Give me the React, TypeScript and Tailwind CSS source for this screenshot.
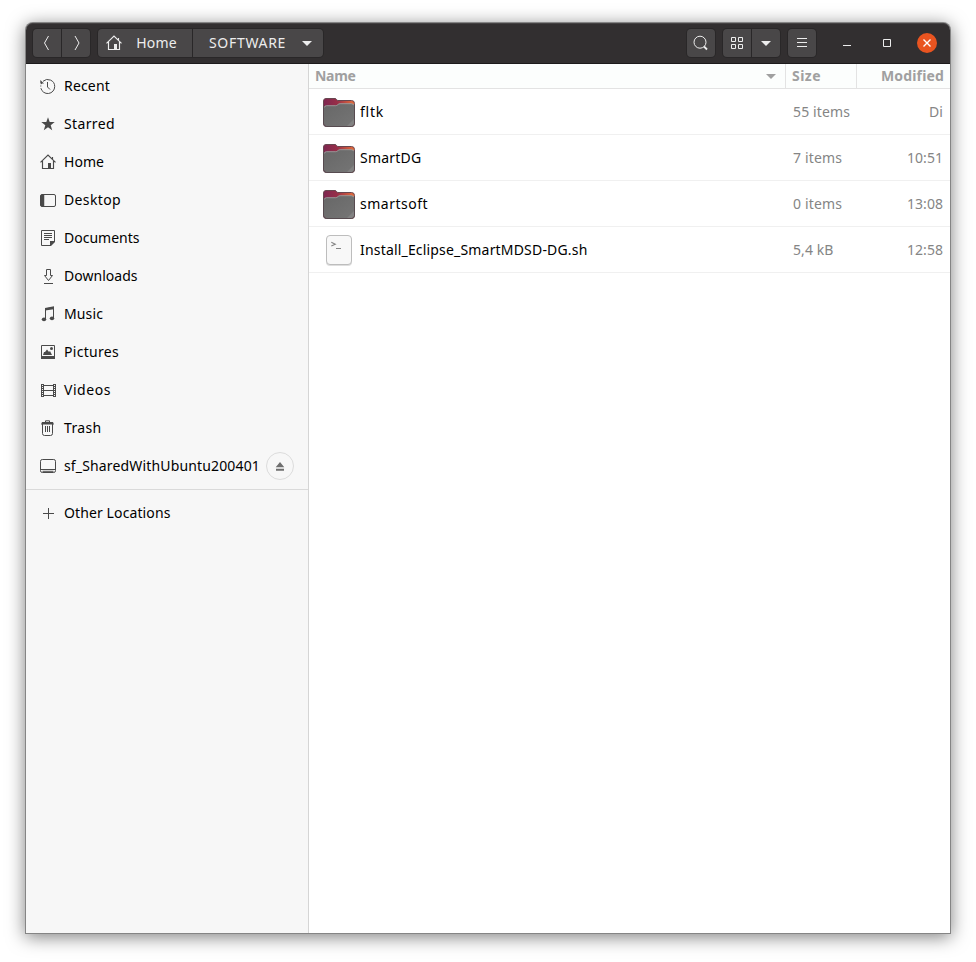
import React, { useLayoutEffect, useRef } from "react";

/** Text run whose tracking is adjusted so that it fills the given width. */
function Label({ text, width, className = "" }: { text: string; width: number; className?: string }) {
  const ref = useRef<HTMLSpanElement>(null);
  useLayoutEffect(() => {
    const el = ref.current;
    if (!el) return;
    el.style.letterSpacing = "0px";
    const natural = el.getBoundingClientRect().width;
    el.style.letterSpacing = `${(width - natural) / text.length}px`;
  }, [text, width]);
  return (
    <span ref={ref} className={`shrink-0 whitespace-pre ${className}`}>
      {text}
    </span>
  );
}

function Svg({ children, size = 16, className = "" }: { children: React.ReactNode; size?: number; className?: string }) {
  return (
    <svg width={size} height={size} viewBox={`0 0 ${size} ${size}`} fill="none" stroke="currentColor" className={`shrink-0 ${className}`}>
      {children}
    </svg>
  );
}

const HomeShape = () => (
  <>
    <path d="M.5 8.3 8 1l7.5 7.3M2.5 7v7.5h11V7M12.5 5V3" strokeWidth="1.15" />
    <path d="M8 9h3v6H8z" fill="currentColor" stroke="none" />
  </>
);

const places = [
  { name: "Recent", width: 46, icon: <><path d="M3 3.300A7 7 0 0 1 14.700 8.500a7 7 0 0 1-13.800 1.700" /><path d="M.8 8.500v-1M1.200 6.200l.5-1.100" /><path d="M.3 2v3.500H4z" fill="currentColor" stroke="none" /><path d="M7.500 4v5l2.500 2.500" /></> },
  { name: "Starred", width: 51, icon: <path d="m8 1.300 1.700 4.700h5l-4 3.200 1.500 5-4.200-3-4.200 3 1.500-5-4-3.200h5z" fill="currentColor" stroke="none" /> },
  { name: "Home", width: 40, icon: <HomeShape /> },
  { name: "Desktop", width: 57, icon: <><rect x=".5" y="2.500" width="15" height="12" rx="1.500" /><path d="M1 3h3v11H1z" fill="currentColor" strokeWidth=".5" /></> },
  { name: "Documents", width: 75.5, icon: <><path d="M10.500 15.500h-9V.5h13v11" /><path d="M4 3.500h8M4 5.500h8M4 7.500h8M4 9.500h5" /><path d="M10 11h5v1l-4 4h-1z" fill="currentColor" stroke="none" /></> },
  { name: "Downloads", width: 73.5, icon: <path d="M6.500 1.500h4v6h2l-4 5-4-5h2zM4 15.500h9" /> },
  { name: "Music", width: 39, icon: <><path d="M5.500 13V2.800l8-1.300V12" /><path d="M5 2 14 .3v3L5 4.500z" fill="currentColor" stroke="none" /><ellipse cx="4" cy="13.300" rx="2.200" ry="1.900" fill="currentColor" stroke="none" /><ellipse cx="12" cy="12.300" rx="2.200" ry="1.900" fill="currentColor" stroke="none" /></> },
  { name: "Pictures", width: 55, icon: <><path d="M1.500 1.500h13v13h-13z" /><path d="M1 12h14v3H1zM3 11l1-3h1l2-2.500L9 8l1-1 2 4z" fill="currentColor" stroke="none" /><circle cx="11.500" cy="4.500" r="1.500" fill="currentColor" stroke="none" /></> },
  { name: "Videos", width: 47, icon: <><path d="M3.500 2v13M13.500 2v13M3.500 3.500h10M3.500 8.500h10M3.500 13.500h10" /><path d="M1.500 2v13M15.500 2v13" /><path d="M2.500 2v13M14.500 2v13" strokeDasharray="1 1" /></> },
  { name: "Trash", width: 37.5, icon: <><path d="M5.500 2V.8h4V2M2.500 4v9.500q0 2 2 2h6q2 0 2-2V4M5.500 6v6M7.500 6v6M9.500 6v6" /><path d="M2 2h11l1 2.500H1z" fill="currentColor" stroke="none" /></> },
  { name: "sf_SharedWithUbuntu200401", width: 196, icon: <><rect x=".5" y="1.500" width="15" height="13" rx="1.800" /><path d="M1 11.500h14M2.500 13.300h11" /></> },
];

const rows = [
  { name: "fltk", width: 24, size: "55 items", sw: 57, modified: "Di", mw: 14 },
  { name: "SmartDG", width: 61.5, size: "7 items", sw: 49, modified: "10:51", mw: 36 },
  { name: "smartsoft", width: 68, size: "0 items", sw: 49, modified: "13:08", mw: 36 },
  { name: "Install_Eclipse_SmartMDSD-DG.sh", width: 227.5, size: "5,4 kB", sw: 40.5, modified: "12:58", mw: 36 },
];

function FolderIcon() {
  return (
    <svg width="32" height="30" viewBox="0 0 32 30" className="ml-[14px] mt-[3px] shrink-0">
      <defs>
        <linearGradient id="folderBack" x1="0" x2="1">
          <stop offset="0" stopColor="#7d2650" />
          <stop offset=".45" stopColor="#982f48" />
          <stop offset="1" stopColor="#e9703a" />
        </linearGradient>
        <linearGradient id="folderFront" x1="0" y1="0" x2="1" y2="1">
          <stop offset="0" stopColor="#676767" />
          <stop offset="1" stopColor="#757575" />
        </linearGradient>
      </defs>
      <path d="M.5 25V3Q.5.5 3 .5h9q1 0 1.500 1t1.500 1h13.500q3 0 3 3V25q0 3.500-3 3.500h-25q-3 0-3-3.500z" fill="url(#folderBack)" stroke="#684750" />
      <path d="M1 9.500q0-2 2.500-2h9q1.300 0 2.300-1t2.300-1h11q2.900 0 2.900 2V25.500q0 2.500-2.500 2.500h-25Q1 28 1 25.500z" fill="url(#folderFront)" />
      <path d="M1.300 9.500q.3-1.800 2.200-1.800h9q1.300 0 2.300-1t2.300-1h11q2.300 0 2.600 1.500" fill="none" stroke="#a3a3a3" strokeWidth=".8" />
      <path d="m24 28 7-7v4.500q0 2.500-2.500 2.500z" fill="#828282" />
      <path d="M.5 8v17.500q0 3 3 3h25q3 0 3-3V7" fill="none" stroke="#574b50" />
    </svg>
  );
}

function ScriptIcon() {
  return (
    <div className="ml-[17px] mr-[3px] flex h-[30px] w-[26px] shrink-0 rounded-[4px] border border-[#bdbdbd] bg-[#f8f8f8] shadow-[0_1px_0_#dedede]">
      <svg width="24" height="28" viewBox="0 0 24 28" className="shrink-0" fill="none" stroke="#858585">
        <path d="m4.300 6.300 4 1.900-4 1.900" strokeWidth="1.100" />
        <path d="M9 12.500h5" />
      </svg>
    </div>
  );
}

const button = "flex h-7 items-center justify-center bg-[#494748] shadow-[0_0_0_1px_#292728]";

function Caret({ className = "" }: { className?: string }) {
  return (
    <svg width="10" height="5" viewBox="0 0 10 5" className={`shrink-0 ${className}`}>
      <path d="M0 0h10L5 5z" fill="currentColor" />
    </svg>
  );
}

function HeaderBar() {
  return (
    <header className="flex h-[41px] items-center rounded-t-[7px] border-b border-[#1d1b1c] bg-[#322f30] pl-[7px] pr-[13px] text-[#ededed] shadow-[inset_0_1px_0_#454243]">
      <div className="flex gap-px">
        <div className={`${button} w-7 rounded-l-[4px]`}>
          <Svg><path d="M9.500 1 5.500 8l4 7" /></Svg>
        </div>
        <div className={`${button} w-7 rounded-r-[4px]`}>
          <Svg><path d="m7 1 4 7-4 7" /></Svg>
        </div>
      </div>
      <div className="ml-2 flex gap-px">
        <div className={`${button} w-[94px] rounded-l-[4px] pr-[6px]`}>
          <Svg className="-ml-px"><HomeShape /></Svg>
          <Label text="Home" width={40.5} className="ml-[14px]" />
        </div>
        <div className={`${button} w-[130px] rounded-r-[4px]`}>
          <Label text="SOFTWARE" width={77} className="ml-[5px]" />
          <Caret className="ml-4" />
        </div>
      </div>
      <div className="grow" />
      <div className={`${button} w-7 rounded-[4px]`}>
        <Svg><circle cx="7" cy="7.200" r="6" /><path d="m11 11.500 3 3" strokeWidth="1.800" /></Svg>
      </div>
      <div className="ml-2 flex gap-px">
        <div className={`${button} w-7 rounded-l-[4px]`}>
          <Svg><path d="M2.500 2.500h4v4h-4zM9.500 2.500h4v4h-4zM2.500 9.500h4v4h-4zM9.500 9.500h4v4h-4z" /></Svg>
        </div>
        <div className={`${button} w-7 rounded-r-[4px]`}>
          <Caret className="mt-px" />
        </div>
      </div>
      <div className={`${button} ml-2 w-7 rounded-[4px]`}>
        <Svg><path d="M3 3.500h10M3 7.500h10M3 11.500h10" /></Svg>
      </div>
      <Svg className="ml-[23px]"><path d="M4 10.500h8" /></Svg>
      <Svg className="ml-6"><path d="M4.500 4.500h7v7h-7z" /></Svg>
      <div className="ml-[22px] flex size-5 items-center justify-center rounded-full bg-[#e95420] text-white">
        <Svg><path d="m4.500 4.500 7 7m0-7-7 7" strokeWidth="1.400" /></Svg>
      </div>
    </header>
  );
}

export default function App() {
  return (
    <div className="h-[962px] w-[976px] overflow-hidden bg-white pl-[26px] pt-[23px] font-['Noto_Sans',sans-serif] text-[14px] leading-5 text-black">
      <div className="flex h-[910px] w-[924px] flex-col rounded-t-[7px] bg-white shadow-[0_0_0_1px_#858585,0_3px_18px_1px_rgba(0,0,0,0.5)]">
        <HeaderBar />
        <div className="flex grow">
          <aside className="w-[283px] border-r border-[#d5d5d5] bg-[#f7f7f7] pt-[3px]">
            {places.map((place, i) => (
              <div key={place.name} className="flex h-[38px] items-center pl-[14px]">
                <Svg className="mr-2 text-[#4a4a4a]">{place.icon}</Svg>
                <Label text={place.name} width={place.width} />
                {i === places.length - 1 && (
                  <div className="ml-[6px] flex size-7 shrink-0 items-center justify-center rounded-full border border-[#dcdcdc] text-[#6f6f6f]">
                    <Svg><path d="M8 4l4.300 5.300H3.700zM4 10.700h8v2H4z" fill="currentColor" stroke="none" /></Svg>
                  </div>
                )}
              </div>
            ))}
            <div className="mb-1 mt-1 h-px bg-[#dadada]" />
            <div className="flex h-[38px] items-center pl-[14px]">
              <Svg className="mr-2 text-[#4a4a4a]"><path d="M3 8.500h11M8.500 3v11" /></Svg>
              <Label text="Other Locations" width={106.5} />
            </div>
          </aside>
          <main className="grow">
            <div className="flex h-[25px] border-b border-[#e3e3e3] bg-[#fcfefd] font-bold text-[#a0a0a0]">
              <div className="flex w-[477px] items-center justify-between border-r border-[#e3e3e3] pl-[6px] pr-[9px]">
                <Label text="Name" width={40.5} />
                <Caret className="mt-px" />
              </div>
              <div className="flex w-[71px] items-center border-r border-[#e3e3e3] pl-[6px]">
                <Label text="Size" width={29} />
              </div>
              <div className="flex grow items-center justify-end pr-[6px]">
                <Label text="Modified" width={63} />
              </div>
            </div>
            {rows.map((row, i) => (
              <div key={row.name} className="flex h-[46px] items-center border-b border-[#f0f0f0]">
                <div className="flex w-[484px] items-center">
                  {i < 3 ? <FolderIcon /> : <ScriptIcon />}
                  <Label text={row.name} width={row.width} className="ml-[5px]" />
                </div>
                <div className="flex grow items-center justify-between pr-[7px] text-[#858585]">
                  <Label text={row.size} width={row.sw} />
                  <Label text={row.modified} width={row.mw} />
                </div>
              </div>
            ))}
          </main>
        </div>
      </div>
    </div>
  );
}
